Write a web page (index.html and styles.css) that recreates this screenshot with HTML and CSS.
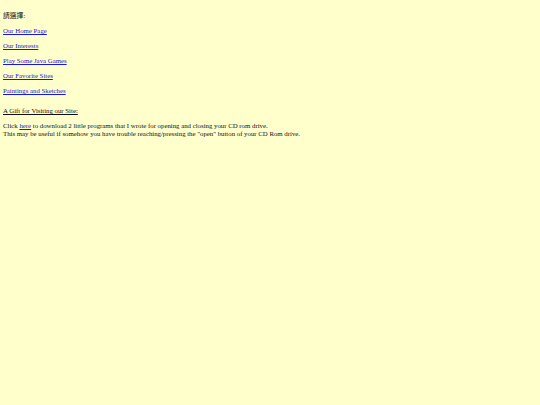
FILE: index.html
```html
<!DOCTYPE html>
<html>
<head>
<meta charset="utf-8">
<title>Home</title>
<link rel="stylesheet" href="styles.css">
</head>
<body class="page">
<div class="content">
  <p class="line">請選擇:</p>
  <p class="line"><a class="nav" href="#">Our Home Page</a></p>
  <p class="line"><a class="nav" href="#">Our Interests</a></p>
  <p class="line"><a class="nav" href="#">Play Some Java Games</a></p>
  <p class="line"><a class="nav" href="#">Our Favorite Sites</a></p>
  <p class="line"><a class="nav" href="#">Paintings and Sketches</a></p>
  <p class="line gift"><u>A Gift for Visiting our Site:</u></p>
  <p class="line text">Click <a class="nav" href="#">here</a> to download 2 little programs that I wrote for opening and closing your CD rom drive.<br>This may be useful if somehow you have trouble reaching/pressing the "open" button of your CD Rom drive.</p>
</div>
</body>
</html>
```
FILE: styles.css
```css
html, body.page {
  margin: 0;
  padding: 0;
  background: #ffffcc;
  min-height: 100%;
}
.content {
  padding: 12px 3px;
  font-family: "Liberation Serif", "Noto Sans CJK TC", serif;
  font-size: 6.8px;
  line-height: 8px;
  color: #111;
}
.line {
  margin: 0 0 7px 0;
}
.nav {
  color: #1a1add;
  text-decoration: underline;
}
.gift {
  margin-top: 12px;
}
```
